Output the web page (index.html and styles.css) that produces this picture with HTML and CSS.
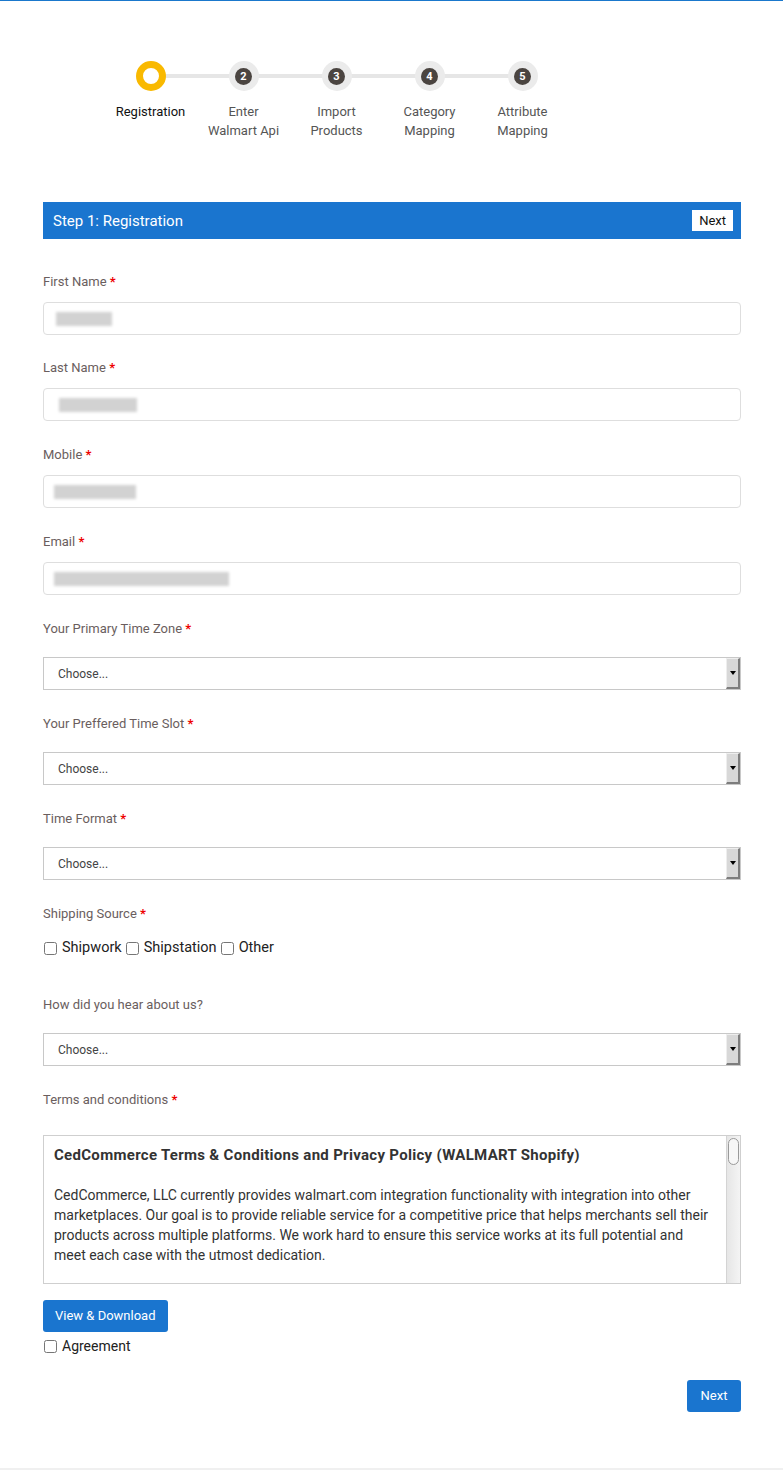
FILE: index.html
```html
<!DOCTYPE html>
<html>
<head>
<meta charset="utf-8">
<link rel="stylesheet" href="styles.css">
</head>
<body>
<div class="page">
  <div class="stepper">
    <div class="step active">
      <div class="track"><span class="dot-active"></span></div>
      <div class="step-label">Registration</div>
    </div>
    <div class="step">
      <div class="track"><span class="dot"><span class="num">2</span></span></div>
      <div class="step-label">Enter<br>Walmart Api</div>
    </div>
    <div class="step">
      <div class="track"><span class="dot"><span class="num">3</span></span></div>
      <div class="step-label">Import<br>Products</div>
    </div>
    <div class="step">
      <div class="track"><span class="dot"><span class="num">4</span></span></div>
      <div class="step-label">Category<br>Mapping</div>
    </div>
    <div class="step last">
      <div class="track"><span class="dot"><span class="num">5</span></span></div>
      <div class="step-label">Attribute<br>Mapping</div>
    </div>
  </div>

  <div class="panel-head">
    <span class="panel-title">Step 1: Registration</span>
    <span class="head-next">Next</span>
  </div>

  <form class="form">
    <div class="field first">
      <label class="lbl">First Name <span class="req">*</span></label>
      <div class="input"><span class="blur b1"></span></div>
    </div>
    <div class="field">
      <label class="lbl">Last Name <span class="req">*</span></label>
      <div class="input"><span class="blur b2"></span></div>
    </div>
    <div class="field">
      <label class="lbl">Mobile <span class="req">*</span></label>
      <div class="input"><span class="blur b3"></span></div>
    </div>
    <div class="field">
      <label class="lbl">Email <span class="req">*</span></label>
      <div class="input"><span class="blur b4"></span></div>
    </div>
    <div class="field sel-field">
      <label class="lbl">Your Primary Time Zone <span class="req">*</span></label>
      <div class="select"><span class="sel-text">Choose...</span><span class="sel-btn"><span class="tri"></span></span></div>
    </div>
    <div class="field sel-field">
      <label class="lbl">Your Preffered Time Slot <span class="req">*</span></label>
      <div class="select"><span class="sel-text">Choose...</span><span class="sel-btn"><span class="tri"></span></span></div>
    </div>
    <div class="field sel-field">
      <label class="lbl">Time Format <span class="req">*</span></label>
      <div class="select"><span class="sel-text">Choose...</span><span class="sel-btn"><span class="tri"></span></span></div>
    </div>
    <div class="field checks-field">
      <label class="lbl">Shipping Source <span class="req">*</span></label>
      <div class="checks">
        <label class="chk"><input type="checkbox">Shipwork</label>
        <label class="chk"><input type="checkbox">Shipstation</label>
        <label class="chk"><input type="checkbox">Other</label>
      </div>
    </div>
    <div class="field sel-field">
      <label class="lbl">How did you hear about us?</label>
      <div class="select"><span class="sel-text">Choose...</span><span class="sel-btn"><span class="tri"></span></span></div>
    </div>
    <div class="field terms-field">
      <label class="lbl">Terms and conditions <span class="req">*</span></label>
      <div class="terms">
        <div class="terms-body">
          <h4 class="terms-title">CedCommerce Terms &amp; Conditions and Privacy Policy (WALMART Shopify)</h4>
          <p class="terms-text">CedCommerce, LLC currently provides walmart.com integration functionality with integration into other marketplaces. Our goal is to provide reliable service for a competitive price that helps merchants sell their products across multiple platforms. We work hard to ensure this service works at its full potential and meet each case with the utmost dedication.</p>
        </div>
        <div class="scrollbar"><span class="thumb"></span></div>
      </div>
    </div>
    <div class="actions">
      <span class="btn">View &amp; Download</span>
      <label class="chk agree"><input type="checkbox">Agreement</label>
    </div>
    <div class="footer">
      <span class="btn btn-next">Next</span>
    </div>
  </form>
</div>
</body>
</html>
```

FILE: styles.css
```css
* { box-sizing: border-box; }
html, body { margin: 0; padding: 0; background: #fff; }
body {
  font-family: Roboto, "Noto Sans", Arial, sans-serif;
  border-top: 1px solid #1a78cc;
  height: 1470px;
}
.page {
  width: 783px;
  height: 1469px;
  border-bottom: 2px solid #f0f0f0;
  padding: 60px 42px 0 43px;
}

/* Stepper */
.stepper {
  display: flex;
  margin-left: 61px;
  width: 465px;
}
.step {
  width: 93px;
  display: flex;
  flex-direction: column;
  align-items: center;
}
.track {
  position: relative;
  width: 100%;
  height: 30px;
  display: flex;
  justify-content: center;
  align-items: center;
}
.track::after {
  content: "";
  position: absolute;
  left: 50%;
  width: 100%;
  top: 13px;
  height: 4px;
  background: #e6e6e6;
  z-index: 0;
}
.step.last .track::after { display: none; }
.dot-active {
  position: relative;
  z-index: 1;
  width: 30px;
  height: 30px;
  border-radius: 50%;
  border: 7px solid #f9b900;
  background: #fff;
}
.dot {
  position: relative;
  z-index: 1;
  width: 30px;
  height: 30px;
  border-radius: 50%;
  background: #ebebeb;
  display: flex;
  align-items: center;
  justify-content: center;
}
.num {
  width: 17px;
  height: 17px;
  border-radius: 50%;
  background: #4a4440;
  color: #fff;
  font-size: 11px;
  font-weight: 700;
  line-height: 17px;
  text-align: center;
}
.step-label {
  margin-top: 11px;
  font-size: 13px;
  line-height: 19px;
  color: #555;
  text-align: center;
  white-space: nowrap;
}
.step.active .step-label { color: #111; }

/* Panel header */
.panel-head {
  margin-top: 62px;
  height: 37px;
  background: #1a75cf;
  display: flex;
  align-items: center;
  justify-content: space-between;
  padding: 0 8px 0 10px;
}
.panel-title {
  color: #fff;
  font-size: 15px;
}
.head-next {
  background: #fff;
  color: #111;
  font-size: 13px;
  height: 21px;
  line-height: 21px;
  padding: 0 7px;
}

/* Form */
.form {
  display: flex;
  flex-direction: column;
  padding-top: 34px;
}
.field {
  display: flex;
  flex-direction: column;
  margin-bottom: 25px;
}
.field.first { margin-bottom: 24px; }
.lbl {
  font-size: 13px;
  line-height: 18px;
  color: #6a5e5e;
  margin-bottom: 11px;
}
.req { color: #e00; font-weight: 700; }
.input {
  height: 33px;
  border: 1px solid #dedede;
  border-radius: 4px;
  display: flex;
  align-items: center;
  padding-left: 10px;
}
.blur {
  display: block;
  height: 14px;
  background: #d2d2d2;
  filter: blur(1.8px);
}
.b1 { width: 56px; margin-left: 2px; }
.b2 { width: 78px; margin-left: 5px; }
.b3 { width: 82px; }
.b4 { width: 175px; }

.sel-field .lbl { margin-bottom: 19px; }
.select {
  height: 33px;
  border: 1px solid #c8c8c8;
  display: flex;
  align-items: center;
  justify-content: space-between;
}
.sel-text {
  font-size: 12px;
  color: #444;
  padding-left: 14px;
}
.sel-btn {
  width: 14px;
  height: 31px;
  background: #d8d8d8;
  border-left: 1px solid #eee;
  border-top: 1px solid #eee;
  border-right: 2px solid #7d7d7d;
  border-bottom: 2px solid #7d7d7d;
  display: flex;
  align-items: center;
  justify-content: center;
}
.tri {
  width: 0;
  height: 0;
  border-left: 3px solid transparent;
  border-right: 3px solid transparent;
  border-top: 4px solid #000;
}

.checks-field { margin-bottom: 38px; }
.checks-field .lbl { margin-bottom: 15px; }
.checks { display: flex; }
.chk {
  display: inline-flex;
  align-items: center;
  font-size: 14.5px;
  line-height: 20px;
  color: #222;
}
.chk input {
  width: 13px;
  height: 13px;
  margin: 0 5px 0 1px;
}
.checks .chk + .chk input { margin-left: 4px; }

.terms-field .lbl { margin-bottom: 26px; }
.terms-field { margin-bottom: 16px; }
.terms {
  height: 149px;
  border: 1px solid #cfcfcf;
  display: flex;
}
.terms-body {
  flex: 1;
  padding: 9px 12px 0 10px;
  overflow: hidden;
}
.terms-title {
  margin: 0;
  font-size: 15px;
  line-height: 20px;
  font-weight: 700;
  letter-spacing: 0.3px;
  color: #333;
}
.terms-text {
  margin: 20px 0 0;
  font-size: 14px;
  line-height: 20px;
  color: #333;
}
.scrollbar {
  width: 14px;
  background: linear-gradient(to right, #e6e6e6, #f4f4f4);
  border-left: 1px solid #d4d4d4;
  padding: 2px 1px;
}
.thumb {
  display: block;
  height: 27px;
  border: 1px solid #9a9a9a;
  border-radius: 6px;
  background: #f7f7f7;
}

.actions {
  display: flex;
  flex-direction: column;
  align-items: flex-start;
}
.btn {
  background: #1a75cf;
  color: #fff;
  font-size: 13px;
  height: 32px;
  line-height: 32px;
  padding: 0 12px;
  border-radius: 3px;
}
.agree { margin-top: 4px; font-size: 14px; }
.agree input { margin-left: 1px; }
.footer {
  display: flex;
  justify-content: flex-end;
  margin-top: 24px;
}
.btn-next { width: 54px; text-align: center; padding: 0; }
```
